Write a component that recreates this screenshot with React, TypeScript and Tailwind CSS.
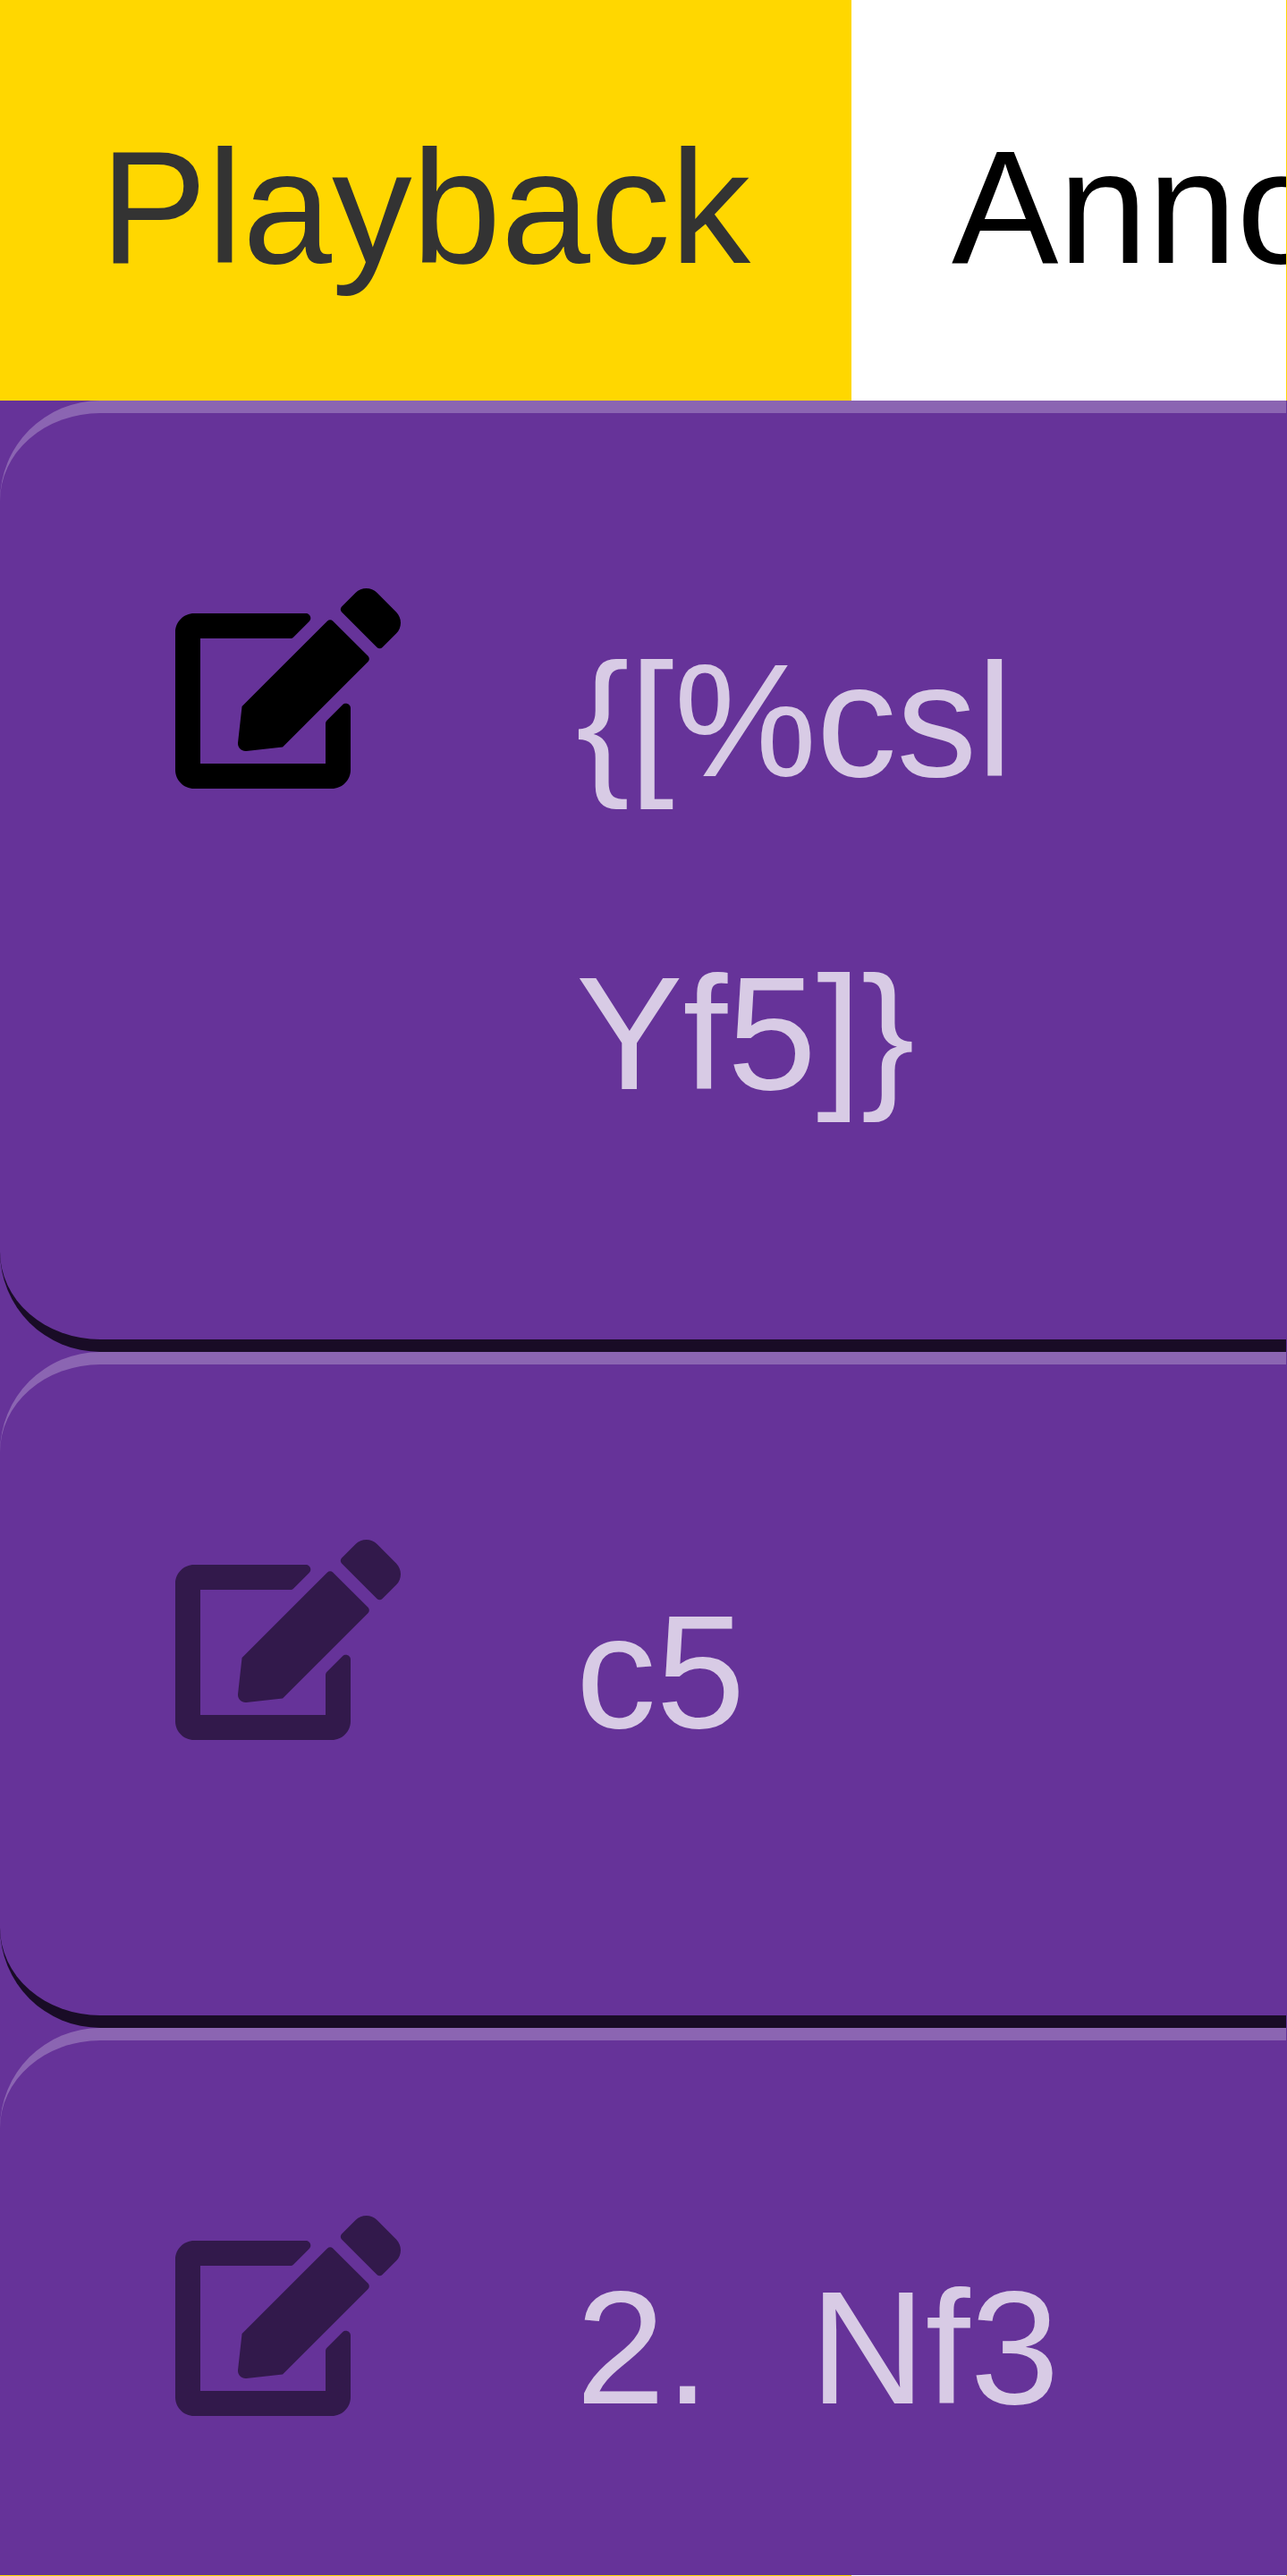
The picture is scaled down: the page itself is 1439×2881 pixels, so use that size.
import React from "react";
import { FaEdit } from "react-icons/fa";

type RowProps = { lines: string[][]; dim?: boolean; height: string };

function Row({ lines, dim, height }: RowProps) {
  return (
    <div
      className={`flex w-[2000px] shrink-0 items-start rounded-[112px] border-t-[14px] border-b-[14px] border-t-white/25 border-b-black/75 ${height}`}
    >
      <FaEdit
        className={`mt-[196px] ml-[196px] h-[224px] w-[252px] shrink-0 text-black ${dim ? "opacity-50" : ""}`}
      />
      <div className="mt-[169px] ml-[196px] text-[179.2px] leading-[350px] whitespace-nowrap text-white/75">
        {lines.map((words, i) => (
          <div key={i} className="flex gap-[112px]">
            {words.map((word) => (
              <span key={word}>{word}</span>
            ))}
          </div>
        ))}
      </div>
    </div>
  );
}

export default function App() {
  return (
    <div className="h-[2881px] w-[1439px] overflow-hidden bg-[#663399] font-['Liberation_Sans',sans-serif]">
      <div className="flex h-[2880px] w-[1438px] flex-col overflow-hidden">
        <div className="flex h-[448px] shrink-0 text-[179.2px] leading-[464px]">
          <div className="h-[448px] w-[952px] shrink-0 bg-[#ffd700] pl-[112px] text-[#333333]">Playback</div>
          <div className="h-[448px] w-[486px] shrink-0 overflow-hidden bg-white pl-[112px] text-black">Annotate</div>
        </div>
        <Row lines={[["{[%csl"], ["Yf5]}"]]} height="h-[1064px]" />
        <Row lines={[["c5"]]} dim height="h-[756px]" />
        <Row lines={[["2.", "Nf3"]]} dim height="h-[756px]" />
      </div>
      <div className="flex h-px">
        <div className="w-[952px] bg-[#ffd700]" />
        <div className="w-[486px] bg-white" />
        <div className="w-px bg-[#ffd700]" />
      </div>
      <div className="absolute top-0 left-[1438px] h-[448px] w-px bg-[#ffd700]" />
    </div>
  );
}
